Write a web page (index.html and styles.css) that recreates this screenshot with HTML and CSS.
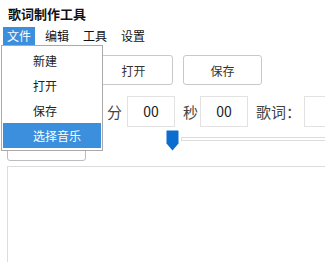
FILE: index.html
```html
<!DOCTYPE html>
<html lang="zh">
<head>
<meta charset="utf-8">
<title>歌词制作工具</title>
<link rel="stylesheet" href="styles.css">
</head>
<body>
<div class="window">
  <div class="title">歌词制作工具</div>
  <div class="menubar">
    <span class="menu-item active">文件</span>
    <span class="menu-item">编辑</span>
    <span class="menu-item">工具</span>
    <span class="menu-item">设置</span>
  </div>
  <div class="toolbar">
    <button class="btn"></button>
    <button class="btn">打开</button>
    <button class="btn">保存</button>
  </div>
  <div class="time-row">
    <span class="label">分</span>
    <div class="field num">00</div>
    <span class="label sec">秒</span>
    <div class="field num">00</div>
    <span class="label lyr">歌词：</span>
    <div class="field wide"></div>
  </div>
  <div class="slider-row">
    <div class="play-box"></div>
    <div class="slider">
      <svg class="thumb" width="13" height="21" viewBox="0 0 13 21">
        <path d="M1 0.5 H12 Q12.5 0.5 12.5 1 V13.5 L6.5 20.5 L0.5 13.5 V1 Q0.5 0.5 1 0.5 Z" fill="#0b6dcf"/>
      </svg>
      <div class="track"></div>
    </div>
  </div>
  <div class="lyrics"></div>

  <div class="dropdown">
    <div class="dd-item">新建</div>
    <div class="dd-item">打开</div>
    <div class="dd-item">保存</div>
    <div class="dd-item selected">选择音乐</div>
  </div>
</div>
</body>
</html>
```
FILE: styles.css
```css
* { box-sizing: border-box; }
html, body {
  margin: 0;
  padding: 0;
  background: #ffffff;
}
body {
  font-family: "Noto Sans CJK SC", "Liberation Sans", sans-serif;
  color: #222222;
  overflow: hidden;
}
.window {
  position: relative;
  width: 325px;
  height: 262px;
  overflow: hidden;
}
.title {
  height: 27px;
  line-height: 27px;
  padding-left: 8px;
  font-size: 13px;
  font-weight: bold;
  color: #111111;
}
.menubar {
  display: flex;
  height: 18px;
  padding-left: 3px;
  gap: 6px;
}
.menu-item {
  padding: 0 4px;
  font-size: 12px;
  line-height: 18px;
  color: #111111;
}
.menu-item.active {
  background: #3b8fdc;
  color: #ffffff;
}
.toolbar {
  display: flex;
  gap: 10px;
  margin-top: 10px;
  padding-left: 5px;
  height: 30px;
}
.btn {
  flex: none;
  width: 79px;
  height: 30px;
  border: 1px solid #c9c9c9;
  border-radius: 3px;
  background: #ffffff;
  font-family: inherit;
  font-size: 12px;
  color: #333333;
  padding: 0;
}
.time-row {
  display: flex;
  align-items: center;
  margin-top: 11px;
  height: 31px;
  padding-left: 107px;
}
.label {
  flex: none;
  white-space: nowrap;
  font-size: 15px;
  color: #444444;
  margin-right: 5px;
}
.label.sec { margin-left: 8px; margin-right: 2px; }
.label.lyr { margin-left: 8px; margin-right: 3px; }
.field {
  flex: none;
  height: 31px;
  border: 1px solid #e2e2e2;
  background: #ffffff;
}
.field.num {
  width: 48px;
  text-align: center;
  line-height: 29px;
  font-size: 14px;
  color: #222222;
}
.field.wide {
  width: 60px;
}
.slider-row {
  display: flex;
  margin-top: 3px;
  height: 31px;
}
.play-box {
  flex: none;
  margin-left: 7px;
  width: 79px;
  height: 31px;
  border: 1px solid #bdbdbd;
  border-radius: 3px;
}
.slider {
  display: flex;
  margin-left: 80px;
  flex: 1;
}
.thumb {
  display: block;
  flex: none;
}
.track {
  flex: 1;
  height: 4px;
  margin-top: 7px;
  margin-left: 2px;
  border: 1px solid #dcdcdc;
  border-right: none;
  background: #ffffff;
}
.lyrics {
  margin-top: 5px;
  margin-left: 7px;
  height: 120px;
  border: 1px solid #dcdcdc;
  border-right: none;
  border-bottom: none;
}
.dropdown {
  position: absolute;
  left: 1px;
  top: 45px;
  width: 102px;
  padding: 2px 1px 2px 1px;
  background: #ffffff;
  border: 1px solid #a9a9a9;
}
.dd-item {
  height: 25px;
  line-height: 25px;
  padding-left: 30px;
  font-size: 12px;
  color: #222222;
}
.dd-item.selected {
  background: #3b8fdc;
  color: #ffffff;
}
```
